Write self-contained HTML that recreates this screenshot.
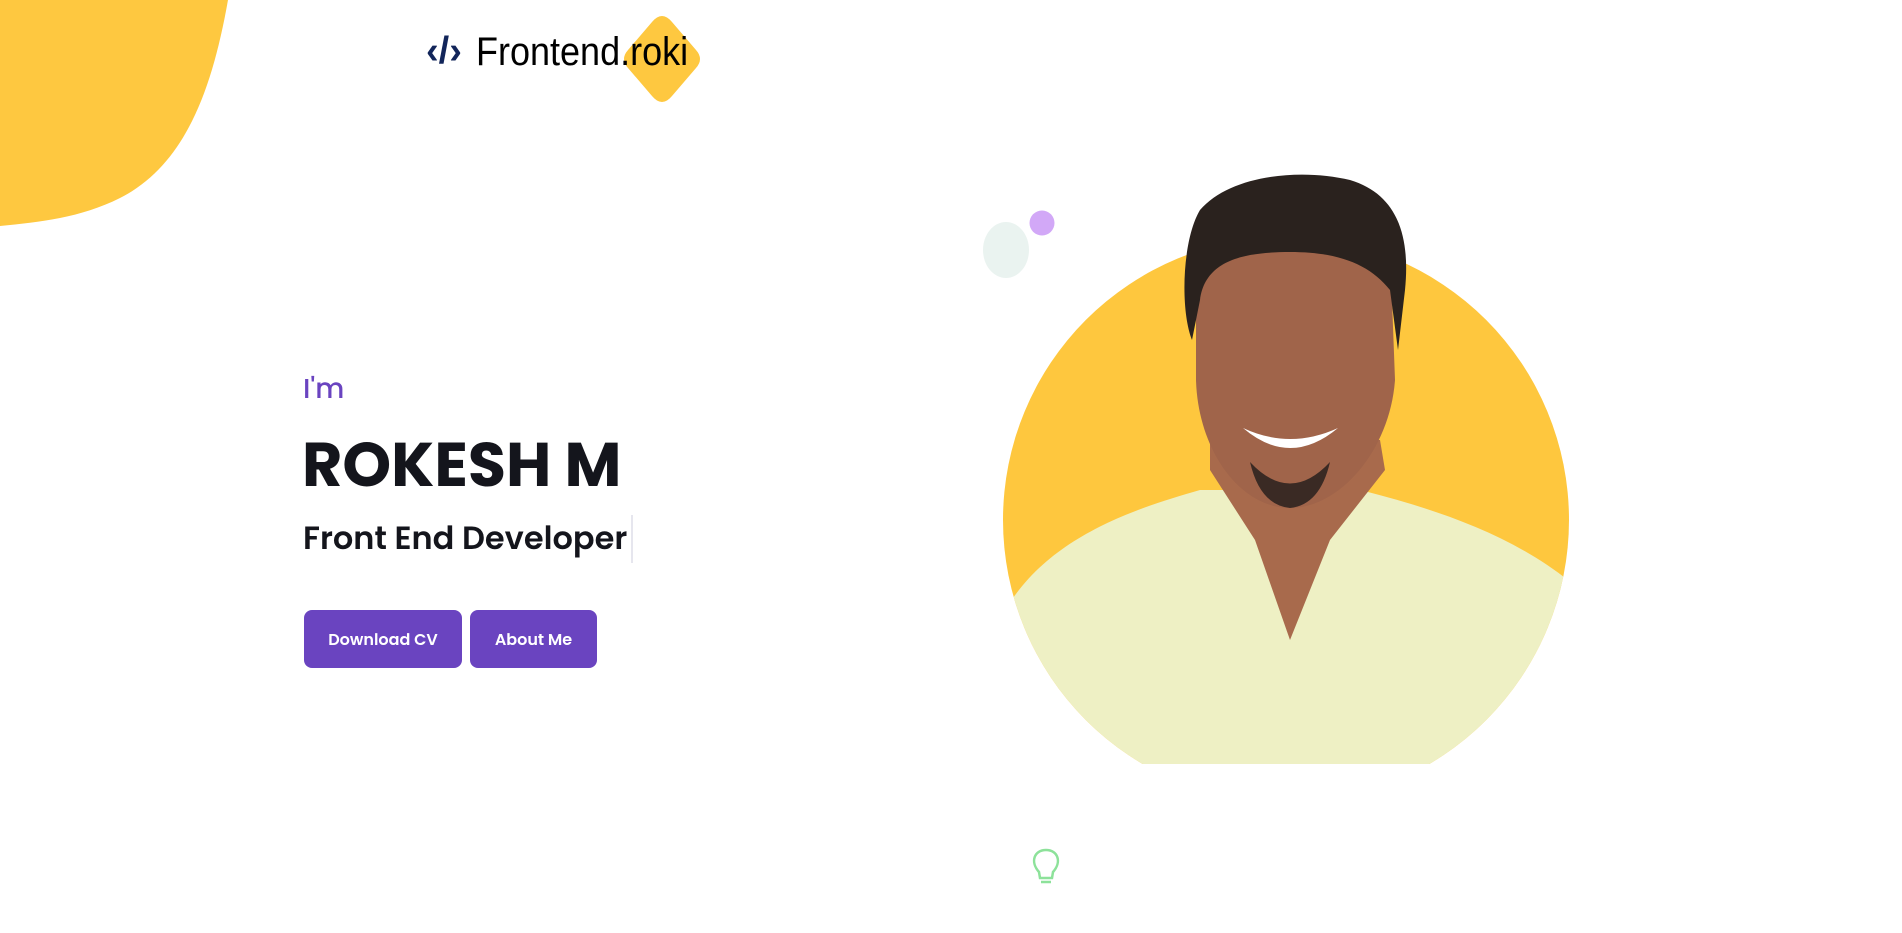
<!DOCTYPE html>
<html><head><meta charset="utf-8"><style>
html,body{margin:0;padding:0;background:#fff;width:1902px;height:933px;overflow:hidden;position:relative;font-family:"Poppins","Liberation Sans",sans-serif}
.abs{position:absolute}
.im{left:303px;top:368px;font-size:28px;color:#6a44c0;font-weight:500}
.name{left:302px;top:418px;font-size:62px;font-weight:700;color:#14151c;white-space:nowrap}
.role{left:303px;top:515px;font-size:32px;font-weight:600;color:#14151c;white-space:nowrap;border-right:2px solid #e6e6ee;padding-right:4px}
.btn{top:610px;height:58px;background:#6a44c0;color:#fff;border-radius:8px;font-size:16px;font-weight:600;display:flex;align-items:center;justify-content:center}
</style></head><body>
<svg class="abs" style="left:0;top:0" width="1902" height="933">
<path d="M0 0 H228 C212 90 185 165 120 198 C80 218 40 222 0 226 Z" fill="#fec840"/>
<path d="M652 22 Q662 10 672 22 L696 50 Q704 59 696 68 L672 96 Q662 108 652 96 L628 68 Q620 59 628 50 Z" fill="#fec840"/>
<ellipse cx="1006" cy="250" rx="23" ry="28" fill="#eaf3f0"/>
<circle cx="1042" cy="223" r="12.5" fill="#d2a8f7"/>
<defs><clipPath id="c"><rect x="990" y="0" width="600" height="764"/></clipPath>
<clipPath id="c2"><circle cx="1286" cy="520" r="283"/></clipPath></defs>
<g clip-path="url(#c)">
<circle cx="1286" cy="520" r="283" fill="#fec73e"/>
<g clip-path="url(#c2)">
<path d="M1000 620 C1040 540 1130 510 1200 490 L1360 490 C1440 510 1530 540 1590 600 L1590 780 L1000 780 Z" fill="#eef0c4"/>
<path d="M1210 470 L1255 540 L1290 640 L1330 540 L1385 470 L1380 440 L1210 440 Z" fill="#a86a4c"/>
</g>
<path d="M1196 300 C1190 255 1220 230 1290 230 C1360 230 1395 255 1392 300 L1395 380 C1390 450 1340 508 1290 508 C1240 508 1198 450 1196 380 Z" fill="#a0644a"/>
<path d="M1192 340 C1180 310 1182 240 1200 210 C1230 175 1300 168 1350 180 C1400 195 1410 240 1405 290 L1398 350 L1390 290 C1370 265 1340 252 1290 252 C1240 252 1205 262 1200 300 Z" fill="#2a221e"/>
<path d="M1243 428 Q1290 450 1338 428 Q1290 468 1243 428 Z" fill="#fff"/>
<path d="M1250 462 Q1290 505 1330 462 Q1320 505 1290 508 Q1260 505 1250 462Z" fill="#3a2a24"/>
</g>
<g fill="none" stroke="#8de29a" stroke-width="2.5"><path d="M1039 872 C1030 862 1034 850 1046 850 C1058 850 1062 862 1053 872 L1052 878 L1040 878 Z"/><path d="M1041 882 H1051"/></g>
</svg>
<div class="abs" style="left:426px;top:30px;font-size:38px;font-weight:700;color:#12255a;font-family:'Liberation Sans',sans-serif">‹/›</div>
<div class="abs" style="left:476px;top:30px;font-size:40px;color:#000;font-family:'Liberation Sans',sans-serif;transform:scaleX(0.9);transform-origin:0 0;white-space:nowrap">Frontend.roki</div>
<div class="abs im">I'm</div>
<div class="abs name">ROKESH M</div>
<div class="abs role">Front End Developer</div>
<div class="abs btn" style="left:304px;width:158px">Download CV</div>
<div class="abs btn" style="left:470px;width:127px">About Me</div>
</body></html>
